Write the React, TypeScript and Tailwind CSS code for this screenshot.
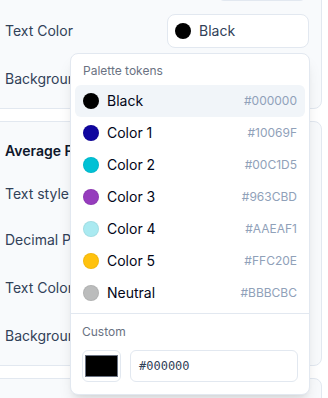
import React from 'react';

const tokens = [
  { name: 'Black', hex: '#000000', color: 'bg-[#000000]' },
  { name: 'Color 1', hex: '#10069F', color: 'bg-[#10069F]' },
  { name: 'Color 2', hex: '#00C1D5', color: 'bg-[#00C1D5]' },
  { name: 'Color 3', hex: '#963CBD', color: 'bg-[#963CBD]' },
  { name: 'Color 4', hex: '#AAEAF1', color: 'bg-[#AAEAF1]' },
  { name: 'Color 5', hex: '#FFC20E', color: 'bg-[#FFC20E]' },
  { name: 'Neutral', hex: '#BBBCBC', color: 'bg-[#BBBCBC]' },
];

const ColorSelect = ({ label }: { label: string }) => (
  <div className="flex h-[34px] items-center justify-between">
    <span className="text-sm text-slate-700">{label}</span>
    <button className="flex h-[34px] w-[142px] items-center gap-2 rounded-lg border border-slate-200 bg-white px-[7px] text-sm text-slate-700">
      <span className="h-4 w-4 rounded-full bg-black" />
      Black
    </button>
  </div>
);

const Row = ({ label, className }: { label: string; className: string }) => (
  <div className={`flex items-center ${className}`}>
    <span className="text-sm text-slate-700">{label}</span>
  </div>
);

const App = () => {
  return (
    <div className="relative h-[398px] w-[328px] overflow-hidden bg-white font-['Inter',sans-serif]">
      <div className="ml-[-8px] mt-[-47px] flex w-[330px] flex-col gap-3">
        {/* Card 1 */}
        <div className="flex flex-col gap-3.5 rounded-lg border border-slate-200 bg-slate-50 p-3">
          <div className="flex h-[34px] justify-end">
            <div className="mr-[3px] h-[35px] w-[88px] rounded-md border border-slate-200 bg-slate-100" />
          </div>
          <ColorSelect label="Text Color" />
          <ColorSelect label="Background" />
        </div>

        {/* Card 2 */}
        <div className="flex flex-col rounded-lg border border-slate-200 bg-slate-50 px-3 pt-3 pb-[9px]">
          <div className="flex h-[34px] items-center">
            <span className="text-sm font-semibold text-slate-900">Average Price</span>
          </div>
          <Row label="Text style" className="h-[52px]" />
          <Row label="Decimal Places" className="h-[40px]" />
          <Row label="Text Color" className="h-[56px]" />
          <Row label="Background" className="h-[40px]" />
        </div>

        {/* Card 3 */}
        <div className="h-[60px] rounded-lg border border-slate-200 bg-slate-50" />
      </div>

      {/* Popover */}
      <div className="absolute left-[70px] top-[53px] w-[240px] rounded-lg border border-slate-200 bg-white shadow-lg">
        <div className="p-1">
          <div className="px-2 pt-[5px] pb-[6px] text-xs leading-4 text-gray-500">Palette tokens</div>
          {tokens.map((t, i) => (
            <div
              key={t.name}
              className={`flex h-8 items-center gap-2 rounded-md px-2 ${i === 0 ? 'bg-slate-100' : ''}`}
            >
              <span className={`h-4 w-4 rounded-full border border-black/5 ${t.color}`} />
              <span className="flex-1 text-sm text-slate-950">{t.name}</span>
              <span className="text-xs text-slate-400">{t.hex}</span>
            </div>
          ))}
        </div>
        <div className="border-t border-slate-200 px-[11px] pt-[10px] pb-3">
          <div className="text-xs leading-4 text-gray-500">Custom</div>
          <div className="mt-[10px] flex gap-[9px]">
            <div className="h-8 w-[39px] rounded-md border border-slate-200 bg-white px-[2px] py-[4px]">
              <div className="h-full w-full border border-gray-500 bg-black" />
            </div>
            <div className="flex h-8 flex-1 items-center rounded-md border border-slate-200 px-2 font-['DejaVu_Sans_Mono',monospace] text-xs text-slate-700">
              #000000
            </div>
          </div>
        </div>
      </div>
    </div>
  );
};

export default App;
